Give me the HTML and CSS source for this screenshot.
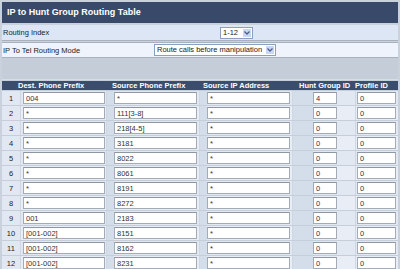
FILE: index.html
```html
<!DOCTYPE html>
<html lang="en">
  <head>
    <meta charset="UTF-8" />
    <title>IP to Hunt Group Routing Table</title>
    <link rel="stylesheet" href="styles.css">
  </head>
  <body>
    <div class="page">
      <h1 class="title">IP to Hunt Group Routing Table</h1>

      <div class="field field-index">
        <span class="field-label">Routing Index</span>
        <span class="combo combo-small">
          <span class="combo-text">1-12</span>
          <span class="combo-arrow">
            <svg width="6" height="4" viewBox="0 0 6 4"><path d="M0.5 0.5 L3 3 L5.5 0.5" fill="none" stroke="#4d6185" stroke-width="1.3"/></svg>
          </span>
        </span>
      </div>

      <div class="field field-mode">
        <span class="field-label">IP To Tel Routing Mode</span>
        <span class="combo combo-wide">
          <span class="combo-text">Route calls before manipulation</span>
          <span class="combo-arrow">
            <svg width="6" height="4" viewBox="0 0 6 4"><path d="M0.5 0.5 L3 3 L5.5 0.5" fill="none" stroke="#4d6185" stroke-width="1.3"/></svg>
          </span>
        </span>
      </div>

      <div class="spacer"></div>

      <table class="routes">
        <colgroup>
          <col class="c-num" />
          <col class="c-dest" />
          <col class="c-src" />
          <col class="c-ip" />
          <col class="c-hunt" />
          <col class="c-prof" />
        </colgroup>
        <thead>
          <tr>
            <th colspan="2" class="h-dest">Dest. Phone Prefix</th>
            <th class="h-src">Source Phone Prefix</th>
            <th class="h-ip">Source IP Address</th>
            <th class="h-hunt">Hunt Group ID</th>
            <th class="h-prof">Profile ID</th>
          </tr>
        </thead>
        <tbody>
          <tr><td class="num">1</td><td class="dest"><input value="004" /></td><td class="src"><input value="*" /></td><td class="ip"><input value="*" /></td><td class="hunt"><input value="4" /></td><td class="prof"><input value="0" /></td></tr>
          <tr><td class="num">2</td><td class="dest"><input value="*" /></td><td class="src"><input value="111[3-8]" /></td><td class="ip"><input value="*" /></td><td class="hunt"><input value="0" /></td><td class="prof"><input value="0" /></td></tr>
          <tr><td class="num">3</td><td class="dest"><input value="*" /></td><td class="src"><input value="218[4-5]" /></td><td class="ip"><input value="*" /></td><td class="hunt"><input value="0" /></td><td class="prof"><input value="0" /></td></tr>
          <tr><td class="num">4</td><td class="dest"><input value="*" /></td><td class="src"><input value="3181" /></td><td class="ip"><input value="*" /></td><td class="hunt"><input value="0" /></td><td class="prof"><input value="0" /></td></tr>
          <tr><td class="num">5</td><td class="dest"><input value="*" /></td><td class="src"><input value="8022" /></td><td class="ip"><input value="*" /></td><td class="hunt"><input value="0" /></td><td class="prof"><input value="0" /></td></tr>
          <tr><td class="num">6</td><td class="dest"><input value="*" /></td><td class="src"><input value="8061" /></td><td class="ip"><input value="*" /></td><td class="hunt"><input value="0" /></td><td class="prof"><input value="0" /></td></tr>
          <tr><td class="num">7</td><td class="dest"><input value="*" /></td><td class="src"><input value="8191" /></td><td class="ip"><input value="*" /></td><td class="hunt"><input value="0" /></td><td class="prof"><input value="0" /></td></tr>
          <tr><td class="num">8</td><td class="dest"><input value="*" /></td><td class="src"><input value="8272" /></td><td class="ip"><input value="*" /></td><td class="hunt"><input value="0" /></td><td class="prof"><input value="0" /></td></tr>
          <tr><td class="num">9</td><td class="dest"><input value="001" /></td><td class="src"><input value="2183" /></td><td class="ip"><input value="*" /></td><td class="hunt"><input value="0" /></td><td class="prof"><input value="0" /></td></tr>
          <tr><td class="num">10</td><td class="dest"><input value="[001-002]" /></td><td class="src"><input value="8151" /></td><td class="ip"><input value="*" /></td><td class="hunt"><input value="0" /></td><td class="prof"><input value="0" /></td></tr>
          <tr><td class="num">11</td><td class="dest"><input value="[001-002]" /></td><td class="src"><input value="8162" /></td><td class="ip"><input value="*" /></td><td class="hunt"><input value="0" /></td><td class="prof"><input value="0" /></td></tr>
          <tr><td class="num">12</td><td class="dest"><input value="[001-002]" /></td><td class="src"><input value="8231" /></td><td class="ip"><input value="*" /></td><td class="hunt"><input value="0" /></td><td class="prof"><input value="0" /></td></tr>
        </tbody>
      </table>
    </div>
  </body>
</html>
```

FILE: styles.css
```css
body {
  margin: 0;
  background-color: #c9d1dc;
  font-family: 'Liberation Sans', Arial, sans-serif;
  color: #222;
  overflow: hidden;
}
.page {
  padding: 2px 2px 0;
}
.title {
  margin: 0;
  height: 21px;
  line-height: 21px;
  padding-left: 5px;
  background-color: #38496a;
  color: white;
  font-size: 9px;
  font-weight: bold;
}
.field {
  display: flex;
  align-items: center;
  font-size: 7.5px;
  border-bottom: 1px solid #a9b1bc;
}
.field-index {
  margin-top: 2px;
  height: 15px;
  background-color: #dde6f5;
}
.field-mode {
  margin-top: 1px;
  height: 14px;
  background-color: #eef3fc;
  border-top: 1px solid #a9b1bc;
}
.field-label {
  padding-left: 1px;
}
.field-index .field-label {
  width: 217px;
}
.field-mode .field-label {
  width: 151px;
}
.combo {
  display: flex;
  align-items: stretch;
  height: 12px;
  box-sizing: border-box;
  border: 1px solid #8aa0bd;
  background-color: white;
}
.combo-small {
  width: 33px;
}
.combo-wide {
  width: 122px;
}
.combo-text {
  flex: 1;
  padding-left: 2px;
  line-height: 10px;
  white-space: nowrap;
  overflow: hidden;
}
.combo-arrow {
  width: 8px;
  margin: 1px;
  display: flex;
  align-items: center;
  justify-content: center;
  background-color: #c8d7f5;
}
.spacer {
  height: 21px;
  background-color: #c5cdd8;
  border-bottom: 1px solid #d7dde5;
}
.routes {
  width: 396px;
  table-layout: fixed;
  border-collapse: separate;
  border-spacing: 0 1px;
  background-color: #c6ced9;
  font-size: 7.5px;
}
.c-num { width: 18px; }
.c-dest { width: 86px; }
.c-src { width: 93px; }
.c-ip { width: 93px; }
.c-hunt { width: 63px; }
.c-prof { width: 43px; }
.routes th {
  height: 9px;
  padding: 0;
  background-color: #3b4d6d;
  color: white;
  font-weight: bold;
  line-height: 9px;
  white-space: nowrap;
  text-align: left;
}
.h-dest { padding-left: 16px !important; }
.h-src { padding-left: 6px !important; }
.h-ip { padding-left: 4px !important; }
.h-hunt { padding-left: 7px !important; }
.h-prof { padding-left: 0 !important; }
.routes td {
  height: 14px;
  padding: 0;
  background-color: #e9eef6;
  border-left: 1px solid #cfd7e2;
}
.routes tr:nth-child(odd) td {
  background-color: #e2e8f2;
}
.routes td.num {
  border-left: none;
  text-align: center;
  background-color: #d6dfec;
}
.routes tr:nth-child(even) td.num {
  background-color: #e1e8f2;
}
.routes td.src,
.routes td.ip,
.routes td.hunt {
  background-image: linear-gradient(to right, #d4ddea 7px, transparent 7px);
}
.routes td.hunt {
  background-image: linear-gradient(to right, #d4ddea 20px, transparent 20px);
}
.routes input {
  display: block;
  box-sizing: border-box;
  height: 12px;
  margin: 0;
  padding: 0 0 0 2px;
  border: 1px solid #a3abb6;
  border-top-color: #8d96a3;
  background-color: white;
  font-family: inherit;
  font-size: 7.5px;
  color: #333;
}
.dest input {
  width: 82px;
  margin-left: 2px !important;
}
.src input,
.ip input {
  width: 83px;
  margin-left: 7px !important;
}
.hunt input {
  width: 24px;
  margin-left: 20px !important;
}
.prof input {
  width: 39px;
  margin-left: 1px !important;
}
```
